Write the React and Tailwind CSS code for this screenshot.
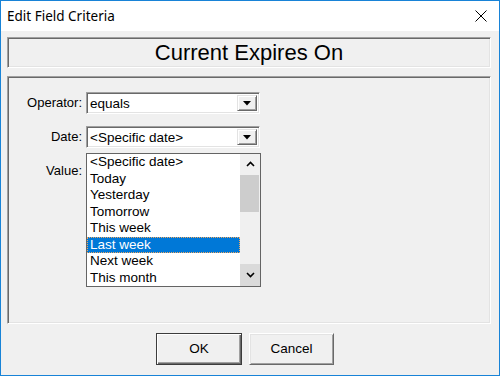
import React from 'react'

const items = ['<Specific date>', 'Today', 'Yesterday', 'Tomorrow', 'This week', 'Last week', 'Next week', 'This month']

const sunken = 'border border-t-[#a0a0a0] border-l-[#a0a0a0] border-b-white border-r-white shadow-[inset_1px_1px_0_#696969,inset_-1px_-1px_0_#e3e3e3]'

const DropArrow = () => (
  <div className="w-[20px] h-full bg-[#f0f0f0] border border-t-[#e3e3e3] border-l-[#e3e3e3] border-b-[#696969] border-r-[#696969] shadow-[inset_1px_1px_0_#fff,inset_-1px_-1px_0_#a0a0a0] flex items-center justify-center">
    <svg width="8" height="5" viewBox="0 0 8 5">
      <path d="M0 0 L8 0 L4 4.5 Z" fill="#000" />
    </svg>
  </div>
)

const Combo = ({ value, children }) => (
  <div className="relative w-[174px] h-[22px]">
    <div className={`w-full h-full bg-white flex items-stretch p-[2px] ${sunken}`}>
      <div className="flex-1 pl-[1px] leading-[18px] text-[13.5px]">{value}</div>
      <DropArrow />
    </div>
    {children}
  </div>
)

const Chevron = ({ up }) => (
  <svg width="9" height="6" viewBox="0 0 9 6">
    <path d={up ? 'M1 5 L4.5 1.5 L8 5' : 'M1 1 L4.5 4.5 L8 1'} fill="none" stroke="#000" strokeWidth="1.6" />
  </svg>
)

const Field = ({ label, children }) => (
  <div className="flex items-center gap-[4px]">
    <span className="w-[74px] text-right">{label}</span>
    {children}
  </div>
)

export default function App() {
  return (
    <div className="w-[500px] h-[376px] border border-[#1883d7] bg-[#f0f0f0] flex flex-col overflow-hidden text-[13px] text-black font-['Liberation_Sans',Arial,sans-serif]">
      {/* Title bar */}
      <div className="h-[30px] bg-white flex items-center justify-between pl-[6px] pr-[12px] shrink-0">
        <span className="text-[13.5px] text-[#000] font-['Noto_Sans',sans-serif]">Edit Field Criteria</span>
        <svg width="12" height="12" viewBox="0 0 12 12">
          <path d="M0.5 0.5 L11.5 11.5 M11.5 0.5 L0.5 11.5" stroke="#000" strokeWidth="1" />
        </svg>
      </div>

      <div className="flex flex-col pl-[6px]">
        {/* Header */}
        <div className={`mt-[6px] w-[484px] h-[31px] flex items-center justify-center text-[22px] ${sunken}`}>
          Current Expires On
        </div>

        {/* Criteria group */}
        <div className={`mt-[8px] w-[484px] h-[248px] pt-[15px] flex flex-col gap-[12px] ${sunken}`}>
          <Field label="Operator:">
            <Combo value="equals" />
          </Field>
          <Field label="Date:">
            <Combo value="<Specific date>">
              <div className="absolute left-0 top-[27px] w-[175px] h-[134px] z-10 bg-white border border-[#646464] flex text-[13.5px]">
                <div className="flex-1 flex flex-col">
                  {items.map((it) => (
                    <div
                      key={it}
                      className={`h-[16.5px] leading-[16.5px] pl-[3px] ${it === 'Last week' ? 'bg-[#0078d7] text-white outline outline-dotted outline-[#f0a860] -outline-offset-1' : ''}`}
                    >
                      {it}
                    </div>
                  ))}
                </div>
                <div className="w-[20px] bg-[#f0f0f0] flex flex-col">
                  <div className="h-[20px] flex items-center justify-center">
                    <Chevron up />
                  </div>
                  <div className="mt-[1px] h-[37px] mr-[1px] bg-[#cdcdcd]" />
                  <div className="flex-1" />
                  <div className="h-[22px] bg-[#dadada] flex items-center justify-center">
                    <Chevron />
                  </div>
                </div>
              </div>
            </Combo>
          </Field>
          <Field label="Value:">
            <div className="w-[174px] h-[22px] bg-white" />
          </Field>
        </div>

        {/* Buttons */}
        <div className="mt-[9px] flex gap-[7px] pl-[149px] text-[13.5px]">
          <button className="w-[86px] h-[32px] bg-[#f0f0f0] border border-[#3c3c3c] shadow-[inset_1px_1px_0_#fff,inset_-1px_-1px_0_#696969,inset_-2px_-2px_0_#a0a0a0]">
            OK
          </button>
          <button className="w-[85px] h-[32px] bg-[#f0f0f0] border border-t-white border-l-white border-b-[#696969] border-r-[#696969] shadow-[inset_1px_1px_0_#e3e3e3,inset_-1px_-1px_0_#a0a0a0]">
            Cancel
          </button>
        </div>
      </div>
    </div>
  )
}
